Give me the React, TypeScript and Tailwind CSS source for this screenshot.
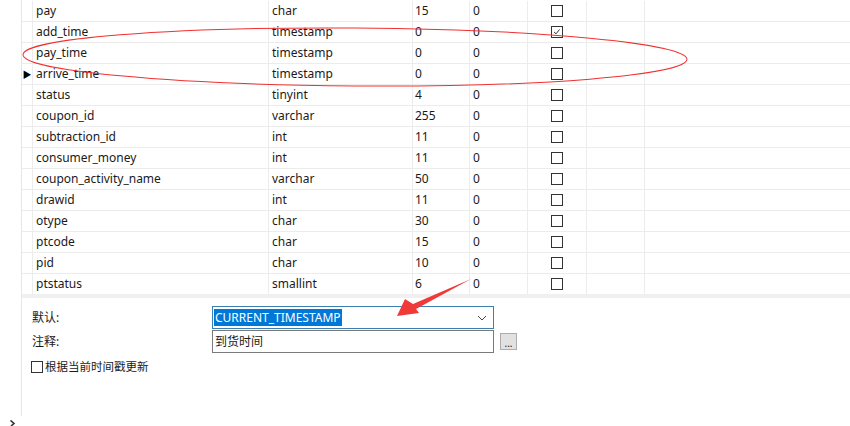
import React from "react";

type Field = {
  name: string;
  type: string;
  length: string;
  decimals: string;
  notNull?: boolean;
  current?: boolean;
};

const fields: Field[] = [
  { name: "pay", type: "char", length: "15", decimals: "0" },
  { name: "add_time", type: "timestamp", length: "0", decimals: "0", notNull: true },
  { name: "pay_time", type: "timestamp", length: "0", decimals: "0" },
  { name: "arrive_time", type: "timestamp", length: "0", decimals: "0", current: true },
  { name: "status", type: "tinyint", length: "4", decimals: "0" },
  { name: "coupon_id", type: "varchar", length: "255", decimals: "0" },
  { name: "subtraction_id", type: "int", length: "11", decimals: "0" },
  { name: "consumer_money", type: "int", length: "11", decimals: "0" },
  { name: "coupon_activity_name", type: "varchar", length: "50", decimals: "0" },
  { name: "drawid", type: "int", length: "11", decimals: "0" },
  { name: "otype", type: "char", length: "30", decimals: "0" },
  { name: "ptcode", type: "char", length: "15", decimals: "0" },
  { name: "pid", type: "char", length: "10", decimals: "0" },
  { name: "ptstatus", type: "smallint", length: "6", decimals: "0" },
];

function CheckBox({ checked }: { checked?: boolean }) {
  return (
    <div className="relative w-[12px] h-[12px] border border-[#333] bg-white">
      {checked && (
        <svg className="absolute inset-0" viewBox="0 0 12 12" width="10" height="10">
          <path d="M2.5 6 L4.8 8.2 L9 3" fill="none" stroke="#333" strokeWidth="1.2" />
        </svg>
      )}
    </div>
  );
}

function FieldRow({ f }: { f: Field }) {
  return (
    <div className="flex h-[21px] border-b border-[#ececec]">
      <div className="w-[11px] flex items-center justify-center border-r border-[#ececec]">
        {f.current && <span className="text-[9px] leading-none text-black">▶</span>}
      </div>
      <div className="w-[236px] pl-[3px] flex items-center border-r border-[#ececec]">{f.name}</div>
      <div className="w-[144px] pl-[3px] flex items-center border-r border-[#ececec]">{f.type}</div>
      <div className="w-[57px] pl-[2px] flex items-center border-r border-[#ececec]">{f.length}</div>
      <div className="w-[58px] pl-[3px] flex items-center border-r border-[#ececec]">{f.decimals}</div>
      <div className="w-[59px] flex items-center justify-center border-r border-[#ececec]">
        <CheckBox checked={f.notNull} />
      </div>
      <div className="w-[58px] border-r border-[#ececec]" />
    </div>
  );
}

export default function App() {
  return (
    <div
      className="relative w-[850px] h-[426px] overflow-hidden bg-white text-[12px] text-[#1a1a1a]"
      style={{ fontFamily: '"Noto Sans", "Noto Sans CJK SC", sans-serif' }}
    >
      <div className="flex h-full">
        <div className="w-[22px] flex flex-col">
          <div className="h-[416px] border-r border-[#e6e6e6]" />
          <svg className="ml-[9px] mt-[4px]" width="8" height="6" viewBox="0 0 8 6">
            <path d="M1.5 0.5 L5 3.5 L2 6" fill="none" stroke="#333" strokeWidth="1.6" />
          </svg>
        </div>
        <div className="flex-1 flex flex-col">
          <div className="h-[294px] pt-[1px]">
            {fields.map((f) => (
              <FieldRow key={f.name} f={f} />
            ))}
          </div>
          <div className="h-[4px] bg-[#f0f0f0]" />
          <div className="pl-[10px] pt-[8px] flex flex-col">
            <div className="flex items-center h-[23px]">
              <div className="w-[180px]">默认:</div>
              <div className="w-[282px] h-[23px] border border-[#3c7fb1] flex items-center justify-between pl-[1px] pr-[6px]">
                <span className="bg-[#0078d7] text-white px-[1px] leading-[17px]">CURRENT_TIMESTAMP</span>
                <svg width="10" height="6" viewBox="0 0 10 6">
                  <path d="M1 1 L5 5 L9 1" fill="none" stroke="#444" strokeWidth="1" />
                </svg>
              </div>
            </div>
            <div className="flex items-center h-[23px] mt-[1px]">
              <div className="w-[180px]">注释:</div>
              <div className="w-[282px] h-[23px] border border-[#7a7a7a] flex items-center pl-[2px]">到货时间</div>
              <div className="ml-[6px] w-[17px] h-[17px] border border-[#adadad] bg-[#e1e1e1] flex items-end justify-center text-[10px] leading-[12px]">
                ...
              </div>
            </div>
            <div className="flex items-center mt-[5px] -ml-[1px]">
              <div className="w-[12px] h-[12px] border border-[#333] mr-[2px]" />
              <span className="text-[11.5px]">根据当前时间戳更新</span>
            </div>
          </div>
        </div>
      </div>

      <svg className="absolute inset-0 pointer-events-none" width="850" height="426">
        <ellipse cx="355" cy="57" rx="332" ry="29" fill="none" stroke="#f03030" strokeWidth="1" transform="rotate(0.4 355 57)" />
        <polygon points="397,316 405,299 413,304 471,279 416,309 419,313" fill="#f03a3a" />
      </svg>
    </div>
  );
}
